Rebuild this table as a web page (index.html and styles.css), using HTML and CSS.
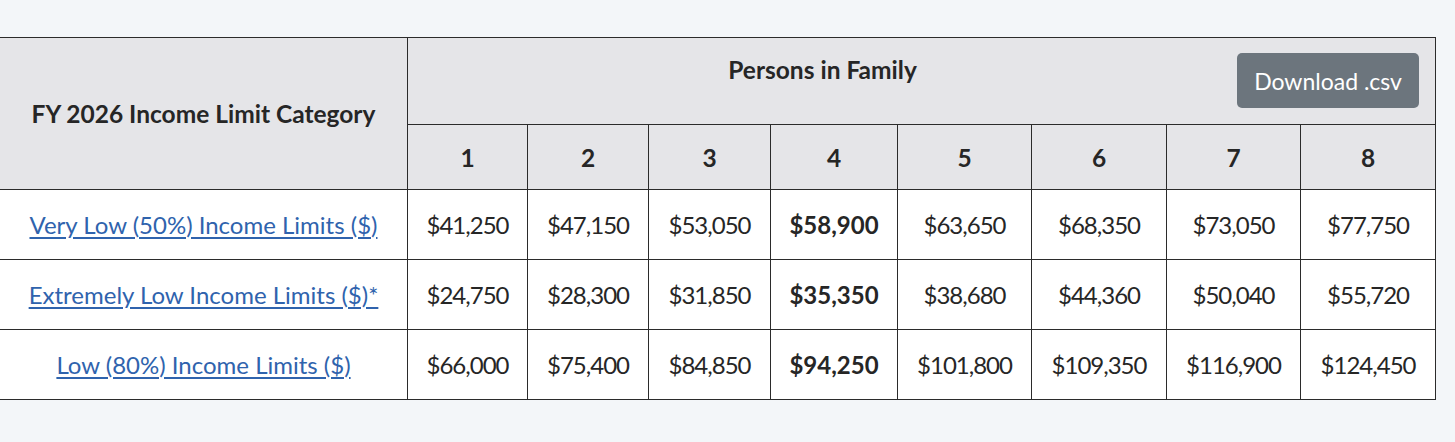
FILE: index.html
```html
<!DOCTYPE html>
<html lang="en">
<head>
<meta charset="utf-8">
<title>FY 2026 Income Limits</title>
<link rel="stylesheet" href="styles.css">
</head>
<body>
<main class="page">
  <table class="limits">
    <colgroup>
      <col class="c-cat">
      <col class="c1"><col class="c2"><col class="c3"><col class="c4">
      <col class="c5"><col class="c6"><col class="c7"><col class="c8">
    </colgroup>
    <thead>
      <tr>
        <th rowspan="2" class="cat-head">FY 2026 Income Limit Category</th>
        <th colspan="8" class="family-head">
          <button class="btn-csv" type="button">Download .csv</button>
          Persons in Family
        </th>
      </tr>
      <tr class="sizes">
        <th>1</th><th>2</th><th>3</th><th>4</th><th>5</th><th>6</th><th>7</th><th>8</th>
      </tr>
    </thead>
    <tbody>
      <tr>
        <td><a href="#" class="cat-link">Very Low (50%) Income Limits ($)</a></td>
        <td class="num">$41,250</td><td class="num">$47,150</td><td class="num">$53,050</td><td class="strong">$58,900</td><td class="num">$63,650</td><td class="num">$68,350</td><td class="num">$73,050</td><td class="num">$77,750</td>
      </tr>
      <tr>
        <td><a href="#" class="cat-link">Extremely Low Income Limits ($)*</a></td>
        <td class="num">$24,750</td><td class="num">$28,300</td><td class="num">$31,850</td><td class="strong">$35,350</td><td class="num">$38,680</td><td class="num">$44,360</td><td class="num">$50,040</td><td class="num">$55,720</td>
      </tr>
      <tr>
        <td><a href="#" class="cat-link">Low (80%) Income Limits ($)</a></td>
        <td class="num">$66,000</td><td class="num">$75,400</td><td class="num">$84,850</td><td class="strong">$94,250</td><td class="num">$101,800</td><td class="num">$109,350</td><td class="num">$116,900</td><td class="num">$124,450</td>
      </tr>
    </tbody>
  </table>
</main>
</body>
</html>
```

FILE: styles.css
```css
html, body {
  margin: 0;
  padding: 0;
  background: #f3f6f9;
}

body {
  font-family: "Lato", "Liberation Sans", sans-serif;
  color: #262626;
  overflow: hidden;
}

.page {
  padding-top: 37px;
}

.limits {
  border-collapse: collapse;
  table-layout: fixed;
  width: 1436px;
  margin-left: -1px;
  font-size: 24px;
}

.c-cat { width: 408px; }
.c1 { width: 120px; }
.c2 { width: 121px; }
.c3 { width: 122px; }
.c4 { width: 127px; }
.c5 { width: 134px; }
.c6 { width: 135px; }
.c7 { width: 134px; }
.c8 { width: 135px; }

.limits th,
.limits td {
  border: 1px solid #2b2b2b;
  text-align: center;
  vertical-align: middle;
  padding: 0;
}

.limits th {
  background: #e5e5e8;
  font-weight: 700;
  font-size: 24.5px;
}

.family-head {
  height: 55px;
  padding: 15px 16px 16px 16px !important;
  vertical-align: top !important;
  line-height: 34px;
}

.sizes th {
  height: 64px;
}

.limits td {
  background: #ffffff;
  height: 69px;
}

.num {
  letter-spacing: -1px;
}

.strong {
  font-weight: 700;
}

.cat-link {
  color: #2f63ad;
  text-decoration: underline;
  text-underline-offset: 3px;
}

.btn-csv {
  float: right;
  width: 182px;
  height: 55px;
  margin-left: 16px;
  border: 0;
  border-radius: 5px;
  background: #6c757d;
  color: #ffffff;
  font-family: inherit;
  font-size: 23px;
  font-weight: 400;
  padding: 0;
  cursor: pointer;
}
```
